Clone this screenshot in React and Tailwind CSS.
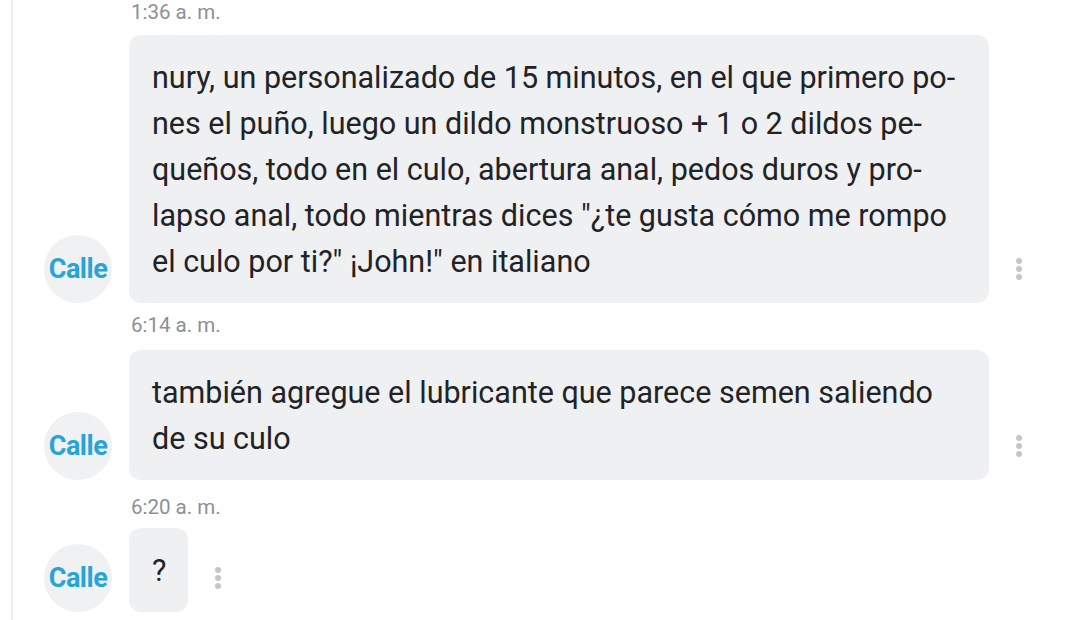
import React from 'react';

const messages = [
  {
    time: '1:36 a. m.',
    lines: [
      'nury, un personalizado de 15 minutos, en el que primero po-',
      'nes el puño, luego un dildo monstruoso + 1 o 2 dildos pe-',
      'queños, todo en el culo, abertura anal, pedos duros y pro-',
      'lapso anal, todo mientras dices "¿te gusta cómo me rompo',
      'el culo por ti?" ¡John!" en italiano',
    ],
    wide: true,
    gap: 'pt-0 pb-[11px]',
  },
  {
    time: '6:14 a. m.',
    lines: ['también agregue el lubricante que parece semen saliendo', 'de su culo'],
    wide: true,
    gap: 'pt-[10px] pb-[13px]',
  },
  {
    time: '6:20 a. m.',
    lines: ['?'],
    wide: false,
    gap: 'pt-[15px] pb-[9px]',
  },
];

const Dots = () => (
  <div className="h-[68px] flex flex-col items-center justify-center gap-[2px] ml-[27px]">
    <span className="w-[6px] h-[6px] rounded-full bg-[#c4c6ca]" />
    <span className="w-[6px] h-[6px] rounded-full bg-[#c4c6ca]" />
    <span className="w-[6px] h-[6px] rounded-full bg-[#c4c6ca]" />
  </div>
);

const Message = ({ m }) => (
  <div>
    <div className={`${m.gap} pl-[118px] text-[20.5px] leading-6 text-[#8b9096]`}>
      {m.time}
    </div>
    <div className="flex items-end">
      <div className="w-[68px] h-[68px] ml-[31px] mr-[17px] shrink-0 rounded-full bg-[#eff1f3] flex items-center justify-center">
        <span className="text-[27px] font-bold text-[#28a4d9] tracking-[-0.5px]">Calle</span>
      </div>
      <div
        className={`${m.wide ? 'w-[860px]' : ''} bg-[#eff0f2] rounded-[12px] pl-[23px] pr-[22px] pt-[20px] pb-[18px] text-[30.5px] leading-[46px] text-[#222326]`}
      >
        {m.lines.map((l, i) => (
          <div key={i} className="whitespace-nowrap">{l}</div>
        ))}
      </div>
      <Dots />
    </div>
  </div>
);

export default function App() {
  return (
    <div
      className="w-[1080px] h-[620px] bg-white overflow-hidden pl-[11px]"
      style={{ fontFamily: 'Roboto, "Noto Sans", sans-serif' }}
    >
      <div className="h-full border-l-[2px] border-[#ececee]">
        {messages.map((m, i) => (
          <Message key={i} m={m} />
        ))}
      </div>
    </div>
  );
}
